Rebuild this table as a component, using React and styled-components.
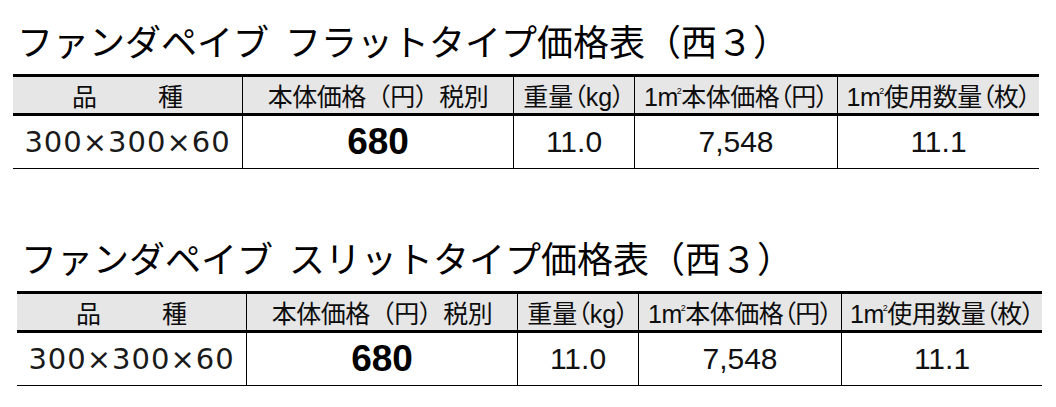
import React from "react";
import styled, { createGlobalStyle } from "styled-components";

const GlobalStyle = createGlobalStyle`
  body {
    margin: 0;
    background: #fff;
    font-family: "Liberation Sans", "Noto Sans CJK JP", sans-serif;
  }
`

const Page = styled.div`
  display: flex;
  flex-direction: column;
  padding-top: 22px;
`

const Section = styled.section`
  margin-left: ${(p) => p.offset}px;
  width: ${(p) => p.width}px;
  & + & {
    margin-top: 70px;
  }
`

const Title = styled.h2`
  margin: 0;
  padding-left: 4px;
  font-family: "Noto Sans CJK JP", sans-serif;
  font-weight: 400;
  font-size: 36px;
  line-height: 36px;
  word-spacing: 8px;
  color: #000;
  white-space: nowrap;
`

const Table = styled.div`
  margin-top: 16px;
  border-top: 3px solid #000;
  border-bottom: 1px solid #000;
`

const Row = styled.div`
  display: grid;
  grid-template-columns: 229px 271px 121px 203px 1fr;
  height: ${(p) => (p.head ? 36 : 52)}px;
  background: ${(p) => (p.head ? "#e6e6e6" : "#fff")};
  border-bottom: ${(p) => (p.head ? "3px solid #000" : "none")};
`

const Cell = styled.div`
  display: flex;
  align-items: center;
  justify-content: center;
  gap: ${(p) => p.gap || 0}px;
  border-left: 1px solid #000;
  white-space: nowrap;
  &:first-child {
    border-left: none;
  }
`

const HeadText = styled.span`
  font-family: "Liberation Sans", "Noto Sans CJK JP", sans-serif;
  font-size: 25px;
  letter-spacing: ${(p) => p.spacing || 0}px;
  color: #0d0d0d;
  font-feature-settings: ${(p) => (p.tight ? '"palt"' : "normal")};
`

const Sup = styled.sup`
  font-size: 9px;
  vertical-align: 12px;
  margin-left: -1px;
  line-height: 0;
`

const SizeText = styled.span`
  font-family: "DejaVu Sans", sans-serif;
  font-weight: 400;
  font-size: 29px;
  letter-spacing: 1px;
  color: #1a1a1a;
`

const Price = styled.span`
  font-family: "Liberation Sans", sans-serif;
  font-weight: 700;
  font-size: 37px;
  color: #000;
`

const Num = styled.span`
  font-family: "Liberation Sans", sans-serif;
  font-size: 30px;
  color: #111;
`

const PriceTable = ({ title, offset, width }) => (
  <Section offset={offset} width={width}>
    <Title>{title}</Title>
    <Table>
      <Row head>
        <Cell gap={61}>
          <HeadText>品</HeadText>
          <HeadText>種</HeadText>
        </Cell>
        <Cell>
          <HeadText spacing={-0.5}>本体価格（円）税別</HeadText>
        </Cell>
        <Cell>
          <HeadText tight>重量（kg）</HeadText>
        </Cell>
        <Cell>
          <HeadText tight spacing={-0.5}>
            1m<Sup>2</Sup>本体価格（円）
          </HeadText>
        </Cell>
        <Cell>
          <HeadText tight spacing={-0.5}>
            1m<Sup>2</Sup>使用数量（枚）
          </HeadText>
        </Cell>
      </Row>
      <Row>
        <Cell>
          <SizeText>300×300×60</SizeText>
        </Cell>
        <Cell>
          <Price>680</Price>
        </Cell>
        <Cell>
          <Num>11.0</Num>
        </Cell>
        <Cell>
          <Num>7,548</Num>
        </Cell>
        <Cell>
          <Num>11.1</Num>
        </Cell>
      </Row>
    </Table>
  </Section>
);

const App = () => {
  return (
    <Page>
      <GlobalStyle />
      <PriceTable title="ファンダペイブ フラットタイプ価格表（西３）" offset={13} width={1026} />
      <PriceTable title="ファンダペイブ スリットタイプ価格表（西３）" offset={17} width={1025} />
    </Page>
  );
};

export default App;
